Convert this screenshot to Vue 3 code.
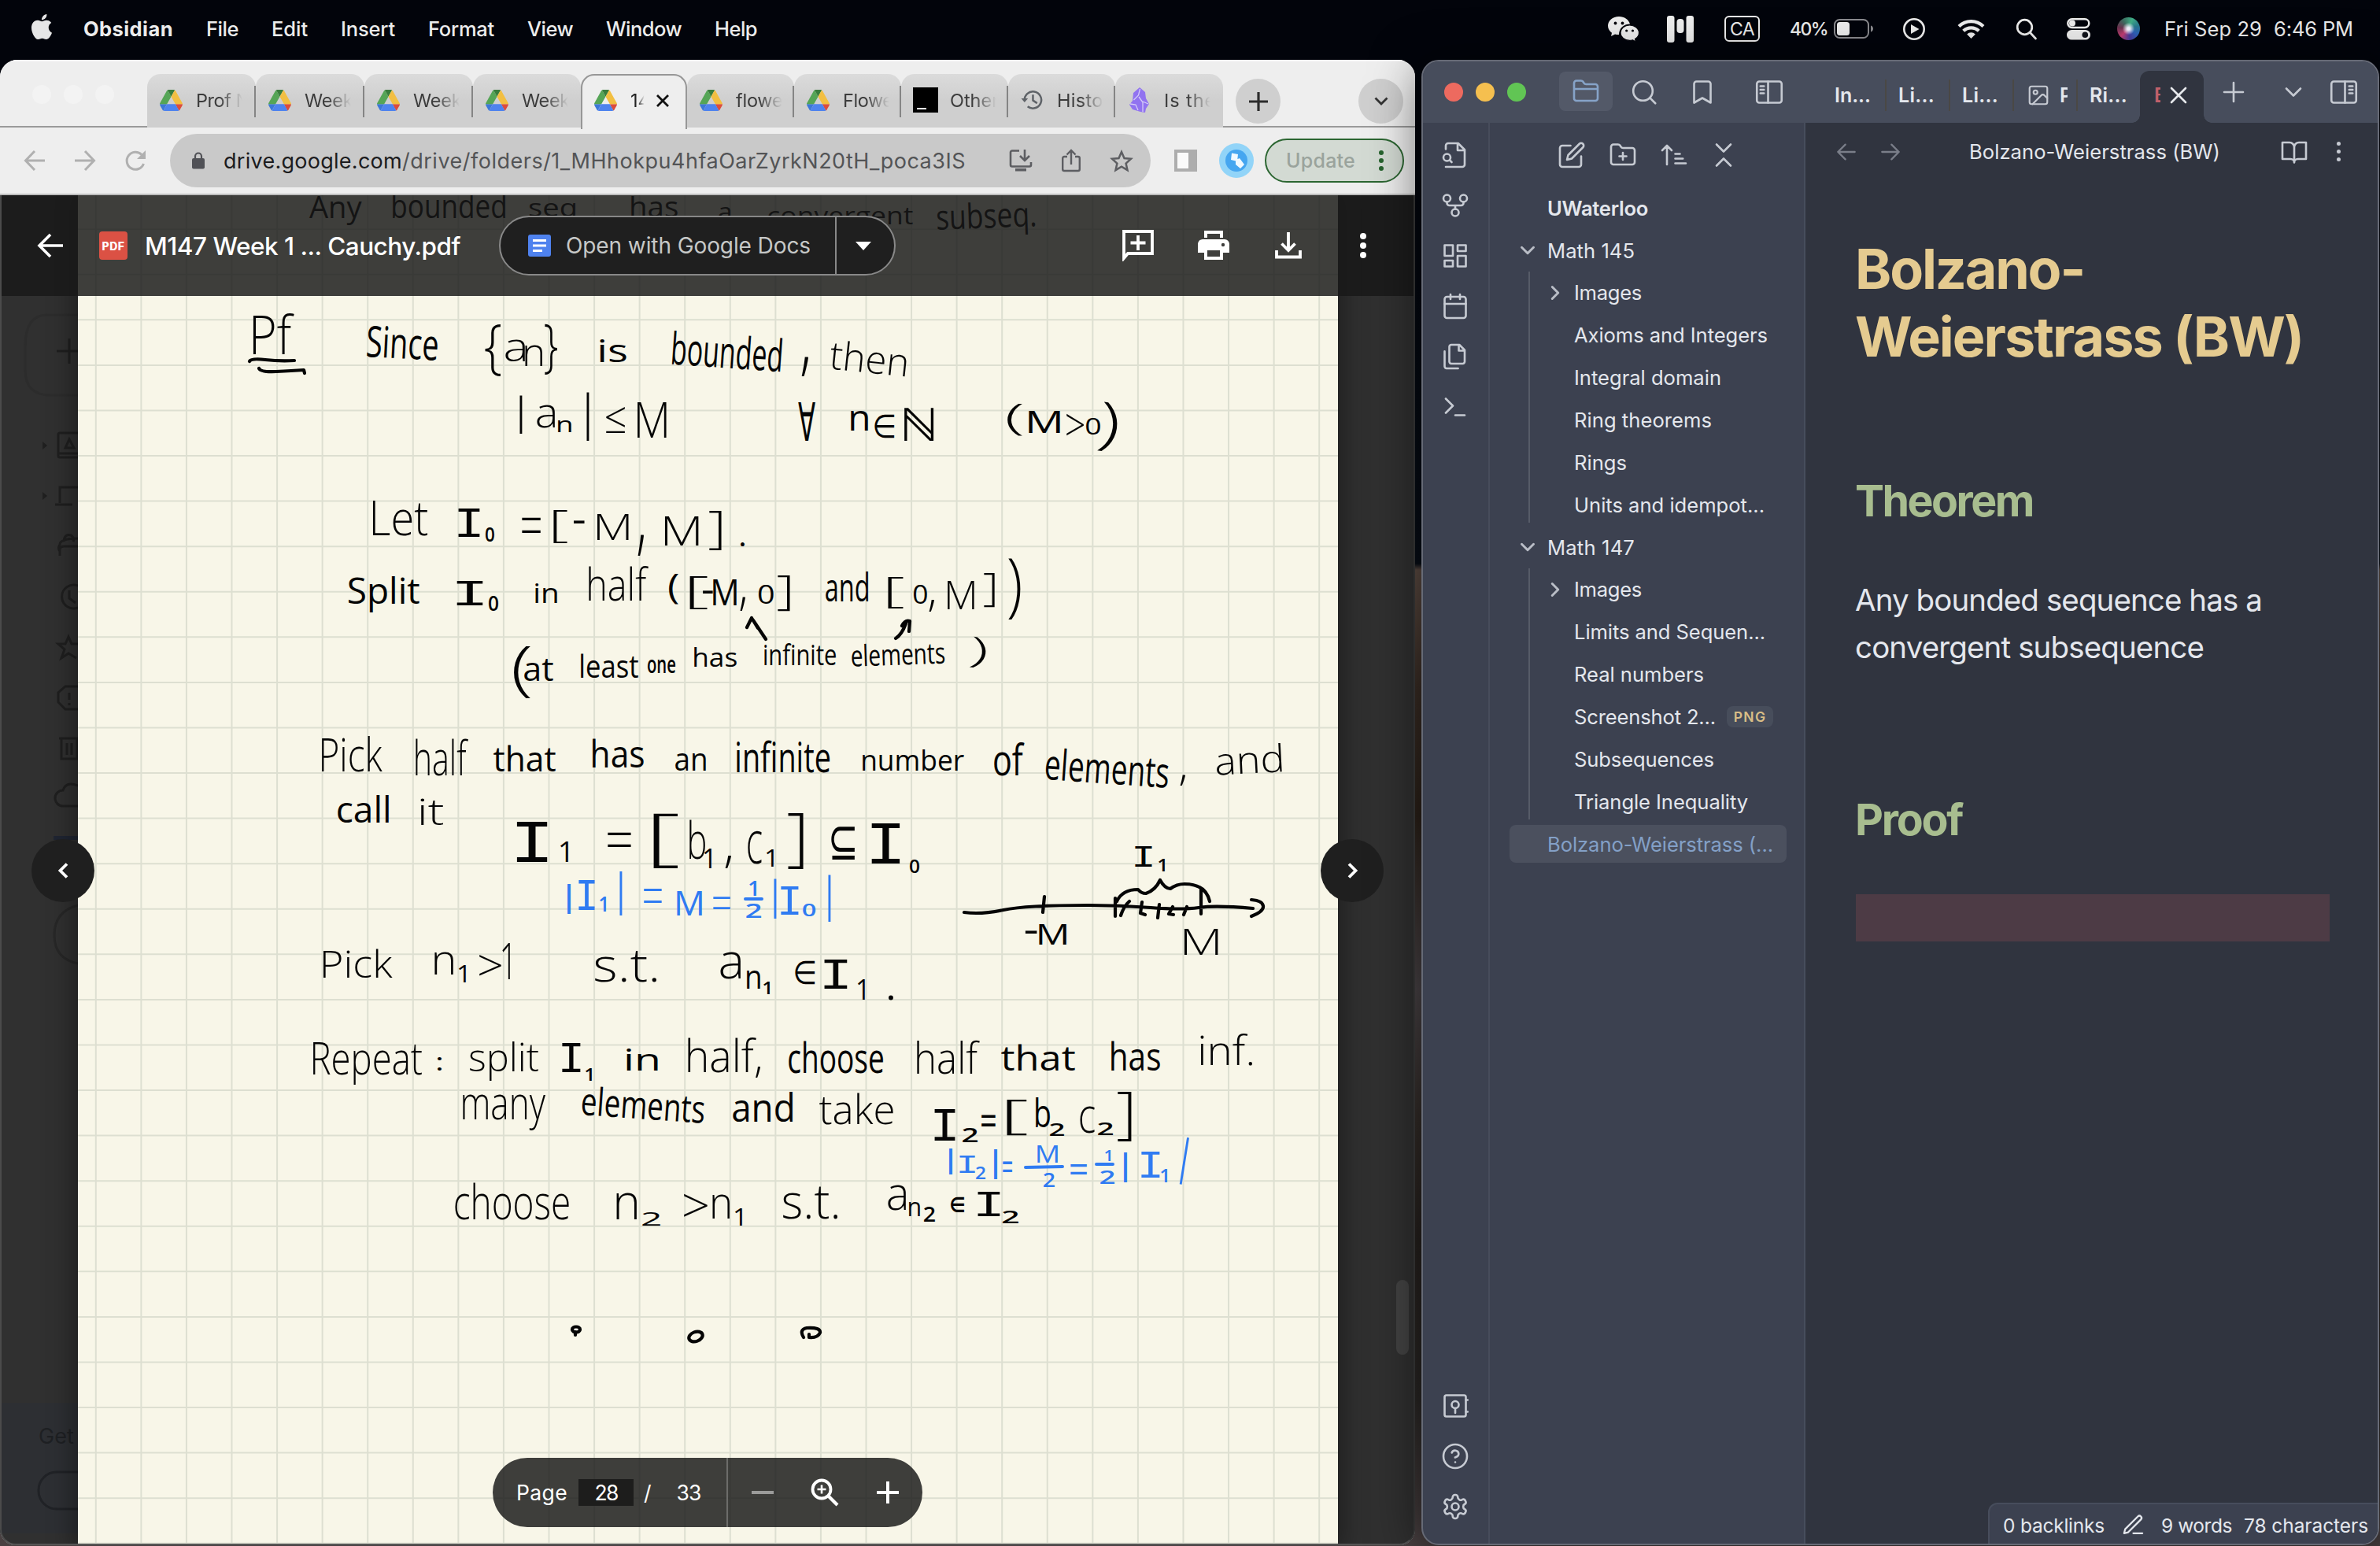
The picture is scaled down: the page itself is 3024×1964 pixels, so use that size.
<script setup>
// Spreads a label's letters so that it fills the given width
const vFit = {
  mounted(el, { value }) {
    const w = el.getBoundingClientRect().width
    el.style.letterSpacing = (value - w) / el.textContent.length + 'px'
  }
}

const menus = [['File', 41], ['Edit', 46], ['Insert', 69], ['Format', 84], ['View', 58], ['Window', 96], ['Help', 54]]

const driveTabs = [
  { t: 'Prof N', i: 'drive', w: 138, f: 68 }, { t: 'Week 2', i: 'drive', w: 138, f: 82 }, { t: 'Week 3', i: 'drive', w: 138, f: 82 },
  { t: 'Week 4', i: 'drive', w: 137, f: 82 }, { t: '147', i: 'drive', w: 135, f: 38, active: true },
  { t: 'flower', i: 'drive', w: 136, f: 68 }, { t: 'Flower', i: 'drive', w: 136, f: 72 }, { t: 'Other', i: 'term', w: 136, f: 62 },
  { t: 'Histor', i: 'hist', w: 136, f: 68 }, { t: 'Is ther', i: 'obs', w: 137, f: 76 }
]

const ribbon = ['fileSearch', 'graph', 'grid', 'cal', 'files', 'term']
const ribbonBottom = ['vault', 'help', 'gear']

const tree = [
  { t: 'UWaterloo', w: 128, l: 0, bold: true },
  { t: 'Math 145', w: 111, l: 0, open: true },
  { t: 'Images', w: 86, l: 1, closed: true },
  { t: 'Axioms and Integers', w: 246, l: 1 },
  { t: 'Integral domain', w: 187, l: 1 },
  { t: 'Ring theorems', w: 175, l: 1 },
  { t: 'Rings', w: 67, l: 1 },
  { t: 'Units and idempot...', w: 242, l: 1 },
  { t: 'Math 147', w: 111, l: 0, open: true },
  { t: 'Images', w: 86, l: 1, closed: true },
  { t: 'Limits and Sequen...', w: 243, l: 1 },
  { t: 'Real numbers', w: 165, l: 1 },
  { t: 'Screenshot 2...', w: 180, l: 1, tag: 'PNG' },
  { t: 'Subsequences', w: 178, l: 1 },
  { t: 'Triangle Inequality', w: 221, l: 1 },
  { t: 'Bolzano-Weierstrass (...', w: 287, l: 0, active: true }
]

const icons = {
  fileSearch: '<path d="M4 22h14a2 2 0 0 0 2-2V7.5L14.5 2H6a2 2 0 0 0-2 2v3M14 2v6h6M9 18l-1.5-1.5"/><circle cx="5" cy="14" r="3"/>',
  graph: '<circle cx="12" cy="18" r="3"/><circle cx="5" cy="6" r="3"/><circle cx="19" cy="6" r="3"/><path d="M19 9v1a2 2 0 0 1-2 2H7a2 2 0 0 1-2-2V9M12 12v3"/>',
  grid: '<path d="M3 3h7v9H3zM14 3h7v5h-7zM14 12h7v9h-7zM3 16h7v5H3z"/>',
  cal: '<rect x="3" y="4" width="18" height="18" rx="2"/><path d="M16 2v4M8 2v4M3 10h18"/>',
  files: '<path d="M15.5 2H8.6c-.4 0-.8.2-1.1.5-.3.3-.5.7-.5 1.1v12.8c0 .4.2.8.5 1.1.3.3.7.5 1.1.5h9.8c.4 0 .8-.2 1.1-.5.3-.3.5-.7.5-1.1V6.5zM15 2v5h5M3 7.6v12.8c0 .4.2.8.5 1.1.3.3.7.5 1.1.5h9.8"/>',
  term: '<path d="M4 17l6-6-6-6M12 19h8"/>',
  vault: '<rect x="3" y="3" width="18" height="18" rx="1.5"/><circle cx="12" cy="11" r="3"/><path d="M12 14v4M21 7h1.5M21 17h1.5"/>',
  help: '<circle cx="12" cy="12" r="10"/><path d="M9.1 9a3 3 0 0 1 5.8 1c0 2-3 3-3 3M12 17h.01"/>',
  gear: '<path d="M12.2 2h-.4a2 2 0 0 0-2 2v.2a2 2 0 0 1-1 1.7l-.4.3a2 2 0 0 1-2 0l-.2-.1a2 2 0 0 0-2.7.7l-.2.4a2 2 0 0 0 .7 2.7l.2.1a2 2 0 0 1 1 1.7v.5a2 2 0 0 1-1 1.8l-.2.1a2 2 0 0 0-.7 2.7l.2.4a2 2 0 0 0 2.7.7l.2-.1a2 2 0 0 1 2 0l.4.3a2 2 0 0 1 1 1.7v.2a2 2 0 0 0 2 2h.4a2 2 0 0 0 2-2v-.2a2 2 0 0 1 1-1.7l.4-.3a2 2 0 0 1 2 0l.2.1a2 2 0 0 0 2.7-.7l.2-.4a2 2 0 0 0-.7-2.7l-.2-.1a2 2 0 0 1-1-1.7v-.5a2 2 0 0 1 1-1.8l.2-.1a2 2 0 0 0 .7-2.7l-.2-.4a2 2 0 0 0-2.7-.7l-.2.1a2 2 0 0 1-2 0l-.4-.3a2 2 0 0 1-1-1.7V4a2 2 0 0 0-2-2z"/><circle cx="12" cy="12" r="3"/>',
  folder: '<path d="M20 20a2 2 0 0 0 2-2V8a2 2 0 0 0-2-2h-7.9a2 2 0 0 1-1.7-.9l-.8-1.2A2 2 0 0 0 7.9 3H4a2 2 0 0 0-2 2v13a2 2 0 0 0 2 2zM2 10h20"/>',
  folderPlus: '<path d="M20 20a2 2 0 0 0 2-2V8a2 2 0 0 0-2-2h-7.9a2 2 0 0 1-1.7-.9l-.8-1.2A2 2 0 0 0 7.9 3H4a2 2 0 0 0-2 2v13a2 2 0 0 0 2 2zM12 10v6M9 13h6"/>',
  search: '<circle cx="11" cy="11" r="8.2"/><path d="M21.5 21.5l-4.6-4.6"/>',
  bookmark: '<path d="M19 21l-7-4-7 4V5a2 2 0 0 1 2-2h10a2 2 0 0 1 2 2z"/>',
  sideL: '<rect x="1.5" y="3" width="21" height="18" rx="2"/><path d="M11 3v18M4.5 7h3M4.5 10h3M4.5 13h3"/>',
  sideR: '<rect x="1.5" y="3" width="21" height="18" rx="2"/><path d="M13 3v18M16.5 7h3M16.5 10h3M16.5 13h3"/>',
  edit: '<path d="M11 4H4a2 2 0 0 0-2 2v14a2 2 0 0 0 2 2h14a2 2 0 0 0 2-2v-7M18.5 2.5a2.1 2.1 0 0 1 3 3L12 15l-4 1 1-4z"/>',
  sort: '<path d="M6 20V4M2 8l4-4 4 4M13 11h4M13 15h6.5M13 19h9"/>',
  collapse: '<path d="M6 21l6-6 6 6M6 3l6 6 6-6"/>',
  image: '<rect x="3" y="3" width="18" height="18" rx="2"/><circle cx="9" cy="9" r="2"/><path d="M21 15l-3-3a2 2 0 0 0-3 0l-9 9"/>',
  x: '<path d="M18 6L6 18M6 6l12 12"/>',
  plus: '<path d="M12 4v16M4 12h16"/>',
  down: '<path d="M6 9l6 6 6-6"/>',
  right: '<path d="M9 6l6 6-6 6"/>',
  back: '<path d="M20 12H4M11 5l-7 7 7 7"/>',
  fwd: '<path d="M4 12h16M13 5l7 7-7 7"/>',
  book: '<path d="M2 4h6a4 4 0 0 1 4 4v13a3 3 0 0 0-3-3H2zM22 4h-6a4 4 0 0 0-4 4v13a3 3 0 0 1 3-3h7z"/>',
  pen: '<path d="M12 20h9M16.5 3.5a2.1 2.1 0 0 1 3 3L7 19l-4 1 1-4z"/>'
}

// Handwritten notes: text, left, right, top, bottom of the ink on the page, tilt
const black = [
  ['Pf', 322, 374, 398, 451], ['Since', 467, 556, 415, 456, 3], ['{', 616, 636, 412, 478], ['a', 642, 667, 432, 459], ['n', 667, 689, 438, 465], ['}', 692, 708, 412, 476],
  ['is', 762, 796, 430, 460], ['bounded', 855, 993, 424, 468, 4], [',', 1018, 1027, 453, 478], ['then', 1055, 1152, 436, 474, 6],
  ['|', 660, 664, 502, 551], ['a', 682, 705, 515, 544], ['n', 709, 726, 534, 549], ['|', 745, 749, 498, 560], ['≤', 770, 794, 517, 551], ['M', 810, 847, 511, 556],
  ['∀', 1014, 1036, 511, 560], ['n', 1081, 1103, 522, 547], ['∈', 1111, 1136, 526, 556], ['ℕ', 1149, 1187, 518, 560], ['(', 1280, 1299, 513, 553], ['M', 1307, 1347, 522, 550],
  ['>', 1355, 1377, 526, 554], ['0', 1380, 1398, 530, 552], [')', 1398, 1420, 512, 574, 8],
  ['Let', 474, 543, 637, 681], ['I', 582, 610, 647, 682], ['0', 617, 628, 670, 688], ['=', 663, 687, 657, 677], ['[', 703, 721, 648, 690], ['-', 729, 743, 661, 665],
  ['M', 759, 799, 653, 686], [',', 810, 818, 679, 706], ['M', 845, 888, 656, 693], [']', 901, 917, 650, 699], ['.', 941, 946, 689, 694],
  ['Split', 443, 533, 732, 778], ['I', 580, 614, 738, 769], ['0', 621, 633, 756, 776], ['in', 680, 708, 741, 766], ['half', 748, 824, 720, 764],
  ['(', 850, 862, 729, 767], ['[', 876, 899, 733, 774], ['-', 893, 906, 750, 754], ['M', 906, 936, 735, 769], [',', 940, 947, 758, 776], ['0', 964, 983, 743, 767], [']', 988, 1004, 731, 776],
  ['and', 1049, 1103, 726, 764], ['[', 1128, 1148, 733, 773], ['0', 1161, 1178, 743, 767], [',', 1180, 1187, 762, 777], ['M', 1204, 1238, 738, 774], [']', 1250, 1264, 728, 772], [')', 1281, 1297, 710, 787],
  ['(', 653, 674, 822, 887], ['at', 666, 703, 836, 865], ['least', 738, 811, 829, 861], ['one', 823, 858, 838, 855], ['has', 882, 936, 822, 847], ['infinite', 971, 1062, 816, 845], ['elements', 1082, 1200, 816, 845, -2], [')', 1234, 1253, 810, 849, 8],
  ['Pick', 409, 486, 935, 981], ['half', 528, 595, 938, 986], ['that', 627, 706, 946, 980], ['has', 753, 818, 938, 975], ['an', 858, 897, 957, 979], ['infinite', 936, 1054, 941, 982],
  ['number', 1096, 1225, 950, 979], ['of', 1263, 1302, 943, 986], ['elements', 1329, 1485, 954, 996, 4], [',', 1499, 1506, 984, 998], ['and', 1545, 1628, 946, 983, -3],
  ['call', 429, 494, 1010, 1045], ['it', 534, 563, 1014, 1048],
  ['I', 656, 696, 1044, 1095], ['1', 712, 722, 1069, 1095], ['=', 772, 802, 1057, 1076], ['[', 830, 862, 1034, 1103], ['b', 876, 896, 1043, 1092], ['1', 895, 904, 1078, 1103],
  [',', 921, 929, 1087, 1103], ['c', 950, 968, 1056, 1098], ['1', 974, 983, 1078, 1101], [']', 1001, 1021, 1034, 1104], ['⊆', 1056, 1086, 1050, 1092], ['I', 1107, 1144, 1046, 1097], ['0', 1156, 1168, 1092, 1109],
  ['I', 1442, 1464, 1075, 1101], ['1', 1472, 1480, 1092, 1107], ['-', 1303, 1318, 1182, 1186], ['M', 1320, 1355, 1173, 1200], ['M', 1505, 1548, 1180, 1213],
  ['Pick', 411, 499, 1205, 1242], ['n', 552, 576, 1209, 1238], ['1', 583, 592, 1226, 1248], ['>', 609, 637, 1213, 1240], ['1', 638, 648, 1197, 1244], ['s.t.', 756, 834, 1208, 1248],
  ['a', 915, 941, 1210, 1244], ['n', 949, 966, 1233, 1256], ['1', 970, 978, 1248, 1263], ['∈', 1010, 1035, 1220, 1250], ['I', 1047, 1077, 1219, 1256], ['1', 1090, 1099, 1244, 1270], ['.', 1129, 1135, 1265, 1271],
  ['Repeat', 398, 536, 1323, 1378], [':', 556, 561, 1342, 1360], ['split', 597, 684, 1323, 1373], ['I', 714, 738, 1325, 1362], ['1', 744, 752, 1357, 1373], ['in', 796, 836, 1332, 1360],
  ['half,', 874, 966, 1318, 1370], ['choose', 1002, 1122, 1322, 1364], ['half', 1165, 1245, 1322, 1365], ['that', 1272, 1366, 1326, 1360], ['has', 1412, 1474, 1322, 1360], ['inf.', 1525, 1591, 1314, 1354],
  ['many', 588, 693, 1390, 1436], ['elements', 740, 895, 1384, 1422, 4], ['and', 931, 1007, 1387, 1425], ['take', 1041, 1135, 1390, 1429],
  ['I', 1187, 1214, 1409, 1449], ['2', 1223, 1242, 1433, 1451], ['=', 1247, 1265, 1416, 1431], ['[', 1279, 1305, 1397, 1442], ['b', 1316, 1334, 1393, 1432], ['2', 1334, 1352, 1427, 1443], ['c', 1372, 1391, 1406, 1440],
  ['2', 1395, 1414, 1427, 1442], [']', 1420, 1438, 1388, 1451],
  ['choose', 578, 723, 1503, 1550], ['n', 783, 809, 1515, 1549], ['2', 816, 839, 1540, 1557], ['>', 869, 899, 1516, 1546], ['n', 905, 927, 1517, 1548], ['1', 934, 943, 1534, 1557],
  ['s.t.', 995, 1064, 1508, 1549], ['a', 1128, 1151, 1506, 1538], ['n', 1155, 1169, 1527, 1545], ['2', 1174, 1188, 1533, 1552], ['∈', 1208, 1225, 1520, 1540], ['I', 1242, 1271, 1515, 1545], ['2', 1274, 1294, 1538, 1554]
]
const blue = [
  ['|', 721, 725, 1123, 1161], ['I', 735, 756, 1118, 1156], ['1', 762, 770, 1138, 1158], ['|', 787, 791, 1108, 1163], ['=', 818, 841, 1129, 1147], ['M', 860, 892, 1131, 1163],
  ['=', 906, 928, 1139, 1155], ['1', 952, 961, 1118, 1138], ['2', 948, 967, 1148, 1166], ['|', 983, 987, 1117, 1167], ['I', 992, 1015, 1127, 1162], ['0', 1020, 1036, 1148, 1164], ['|', 1052, 1056, 1111, 1171],
  ['|', 1206, 1210, 1458, 1492], ['I', 1219, 1239, 1468, 1490], ['2', 1240, 1252, 1482, 1498], ['|', 1263, 1267, 1460, 1498], ['=', 1274, 1286, 1475, 1489], ['M', 1318, 1344, 1455, 1477],
  ['2', 1326, 1340, 1490, 1508], ['=', 1360, 1381, 1478, 1491], ['1', 1404, 1411, 1461, 1475], ['2', 1398, 1416, 1487, 1504], ['|', 1428, 1432, 1464, 1502], ['I', 1450, 1474, 1463, 1496], ['1', 1475, 1483, 1485, 1502], ['|', 1503, 1507, 1445, 1505, 9]
]
const faint = [
  ['Any', 393, 460, 248, 286], ['bounded', 499, 642, 244, 277], ['seq', 673, 731, 258, 282], ['has', 802, 861, 248, 276], ['a', 913, 928, 263, 280], ['convergent', 976, 1160, 264, 292], ['subseq.', 1191, 1315, 256, 300, -2]
]

const ctx = document.createElement('canvas').getContext('2d')
// Picks the weight whose stems come nearest to the pen's width, then scales the ink to its box
const place = ([t, x0, x1, y0, y1, rot = 0]) => {
  const family = t === 'I' ? '"Liberation Mono", monospace' : '"Open Sans", "DejaVu Sans", sans-serif'
  const measure = (weight) => {
    ctx.font = `${weight} 100px ${family}`
    const m = ctx.measureText(t)
    const l = m.actualBoundingBoxLeft, r = m.actualBoundingBoxRight
    const a = m.actualBoundingBoxAscent, d = m.actualBoundingBoxDescent
    return { l, sx: (x1 - x0) / (l + r), sy: (y1 - y0) / (a + d), a }
  }
  let weight = 400
  let m = measure(weight)
  if (t !== 'I') {
    const stem = 3.9 / Math.sqrt(m.sx * m.sy)
    weight = stem < 8.2 ? 300 : stem < 10.5 ? 400 : stem < 12.5 ? 500 : 600
    m = measure(weight)
  }
  return {
    t, weight, family,
    tf: `rotate(${rot} ${(x0 + x1) / 2} ${(y0 + y1) / 2}) translate(${x0 + m.l * m.sx} ${y0 + m.a * m.sy}) scale(${m.sx} ${m.sy})`
  }
}
const ink = [
  { c: '#050505', words: black.map(place) },
  { c: '#2f7bf2', words: blue.map(place) },
  { c: '#000', words: faint.map(place) }
]
const vLines = Array.from({ length: 28 }, (_, i) => 121.8 + i * 57.57)
const hLines = Array.from({ length: 30 }, (_, i) => 291.2 + i * 57.57)
</script>

<template>
  <div class="desktop">
    <header class="menubar">
      <svg class="apple" viewBox="0 0 24 24"><path d="M12.152 6.896c-.948 0-2.415-1.078-3.96-1.04-2.040.027-3.910 1.183-4.961 3.014-2.117 3.675-.546 9.103 1.519 12.090 1.013 1.454 2.208 3.090 3.792 3.039 1.520-.065 2.090-.987 3.935-.987 1.831 0 2.350.987 3.960.948 1.637-.026 2.676-1.480 3.676-2.948 1.156-1.688 1.636-3.325 1.662-3.415-.039-.013-3.182-1.221-3.220-4.857-.026-3.040 2.480-4.494 2.597-4.559-1.429-2.090-3.623-2.324-4.390-2.376-2-.156-3.675 1.090-4.610 1.090zM15.530 3.830c.843-1.012 1.400-2.427 1.245-3.830-1.207.052-2.662.805-3.532 1.818-.780.896-1.454 2.338-1.273 3.714 1.338.104 2.715-.688 3.559-1.701" /></svg>
      <nav class="menus">
        <b v-fit="114">Obsidian</b>
        <span v-for="m in menus" :key="m[0]" v-fit="m[1]">{{ m[0] }}</span>
      </nav>
      <div class="status">
        <svg width="42" height="34" viewBox="0 0 42 34" fill="#ededed"><path d="M15 1C7 1 1 6.200 1 12.800c0 3.700 2 6.800 5 9L5 26l5-2.600c1.500.4 3.300.7 5 .7C15 15 22 10.500 29 10.500 27.500 5 22 1 15 1z" /><path d="M28.500 12C22 12 17 16.300 17 21.700s5 9.700 11.500 9.700c1.400 0 2.700-.2 4-.6l4 2.200-1-3.500c3-1.800 5-4.600 5-7.800C40.500 16.300 35 12 28.500 12z" stroke="#05060d" stroke-width="1.200" /><g fill="#05060d"><circle cx="10.500" cy="9.500" r="1.900" /><circle cx="19.500" cy="9.500" r="1.900" /><circle cx="24.700" cy="19" r="1.600" /><circle cx="32.500" cy="19" r="1.600" /></g></svg>
        <svg class="bars" width="34" height="34" viewBox="0 0 34 34" fill="#ededed"><rect x="0" y="0" width="9.500" height="34" rx="3" /><rect x="24.500" y="0" width="9.500" height="34" rx="3" /><rect x="12.500" y="4" width="9" height="18" rx="4" /></svg>
        <span class="lang"><i v-fit="31">CA</i></span>
        <span class="pct" v-fit="48">40%</span>
        <svg class="batt" width="51" height="26" viewBox="0 0 51 26"><rect x="1" y="1" width="43" height="23" rx="6.500" fill="none" stroke="#8a8a8e" stroke-width="2" /><rect x="4" y="4" width="16" height="17" rx="3.500" fill="#ededed" /><path d="M47 8.500c4 1 4 7 0 8z" fill="#8a8a8e" /></svg>
        <svg class="play" width="30" height="30" viewBox="0 0 30 30"><circle cx="15" cy="15" r="12.700" fill="none" stroke="#ededed" stroke-width="2.600" /><path d="M11 9l10.500 6L11 21z" fill="#ededed" /></svg>
        <svg class="wifi" width="35" height="26" viewBox="0 0 35 26"><g fill="none" stroke="#ededed" stroke-width="4.200"><path d="M2 9.500a22 22 0 0 1 31 0" /><path d="M7.700 15.300a14 14 0 0 1 19.600 0" /></g><path d="M17.500 25l-5.300-5.500a7.600 7.600 0 0 1 10.600 0z" fill="#ededed" /></svg>
        <svg class="spot" width="28" height="28" viewBox="0 0 28 28" fill="none" stroke="#ededed" stroke-width="2.700" stroke-linecap="round"><circle cx="11.500" cy="11.500" r="9.300" /><path d="M18.500 18.500l7 7.500" /></svg>
        <svg class="cc" width="30" height="28" viewBox="0 0 30 28"><rect x="1.300" y="1.300" width="27" height="10.600" rx="5.300" fill="none" stroke="#ededed" stroke-width="2.500" /><circle cx="7" cy="6.600" r="4" fill="#ededed" /><rect x="0" y="15" width="30" height="12.600" rx="6.300" fill="#ededed" /><circle cx="23.300" cy="21.300" r="3.800" fill="#10121a" /></svg>
        <span class="siri"></span>
        <span class="date" v-fit="124">Fri Sep 29</span>
        <span class="time" v-fit="101">6:46 PM</span>
      </div>
    </header>

    <main class="windows">
      <section class="chrome">
        <div class="strip">
          <div class="lights"><i></i><i></i><i></i></div>
          <div class="tabs">
            <div v-for="(t, k) in driveTabs" :key="k" class="tab" :class="{ active: t.active, sep: [0, 1, 2, 5, 6, 7, 8].includes(k) }" :style="{ width: t.w + 'px' }">
              <svg v-if="t.i === 'drive'" class="fav" width="29" height="27" viewBox="0 0 87.300 78" preserveAspectRatio="none">
                <path d="m6.600 66.850 3.850 6.650c.8 1.400 1.950 2.500 3.300 3.300l13.750-23.800h-27.500c0 1.550.4 3.100 1.200 4.500z" fill="#3c78d8" />
                <path d="m43.650 25-13.750-23.800c-1.350.8-2.500 1.900-3.300 3.300l-25.400 44a9.060 9.060 0 0 0 -1.200 4.500h27.500z" fill="#55a556" />
                <path d="m73.550 76.800c1.350-.8 2.500-1.900 3.300-3.300l1.600-2.750 7.650-13.250c.8-1.400 1.200-2.950 1.200-4.500h-27.502l5.852 11.500z" fill="#dc4c3c" />
                <path d="m43.650 25 13.750-23.800c-1.350-.8-2.900-1.200-4.500-1.200h-18.500c-1.600 0-3.150.45-4.500 1.200z" fill="#397d3c" />
                <path d="m59.800 53h-32.300l-13.750 23.800c1.350.8 2.900 1.200 4.500 1.200h50.800c1.600 0 3.150-.45 4.500-1.200z" fill="#4e83ee" />
                <path d="m73.400 26.500-12.700-22c-.8-1.400-1.950-2.500-3.300-3.300l-13.750 23.800 16.150 28h27.450c0-1.550-.4-3.100-1.200-4.500z" fill="#f2bf42" />
              </svg>
              <span v-else-if="t.i === 'term'" class="fav termfav"><i></i></span>
              <svg v-else-if="t.i === 'hist'" class="fav" width="29" height="26" viewBox="0 0 30 26" fill="none" stroke="#5f6368" stroke-width="2.600"><path d="M5 14A11 11 0 1 1 9 21.500M16 6v7.500l5.500 3.800" /><path d="M.5 11h9L5 16z" fill="#5f6368" stroke="none" /></svg>
              <svg v-else class="fav" width="29" height="32" viewBox="-2 0 29 32"><path d="M13 0l7 6 1 8 4 7-4 6-1 5-6-1-10-3-4-6 4-5 1-10z" fill="#9173f0" /><path d="M13.500 2l-2 8-6 6M12 12l5 7v12M1 21l7 1 3 7M17 18l7 3" stroke="#d5cbf8" fill="none" stroke-width="1.300" /></svg>
              <span class="tt"><em v-fit="t.f">{{ t.t }}</em></span>
              <svg v-if="t.active" class="tx" width="18" height="18" viewBox="0 0 18 18"><path d="M2 2l14 14M16 2L2 16" stroke="#111" stroke-width="2.800" /></svg>
            </div>
          </div>
          <span class="round"><svg width="26" height="26" viewBox="0 0 26 26"><path d="M13 1v24M1 13h24" stroke="#2c2c2c" stroke-width="3.200" /></svg></span>
          <span class="round last"><svg width="18" height="12" viewBox="0 0 18 12" fill="none"><path d="M1.500 1.500L9 9l7.500-7.500" stroke="#333" stroke-width="2.800" /></svg></span>
        </div>
        <div class="toolbar">
          <svg class="nav" width="28" height="28" viewBox="0 0 28 28"><path d="M27 14H3M14 2L2.500 14 14 26" /></svg>
          <svg class="nav" width="28" height="28" viewBox="0 0 28 28"><path d="M1 14h24M14 2l11.500 12L14 26" /></svg>
          <svg class="nav" width="28" height="28" viewBox="0 0 28 28"><path d="M24.500 18A11 11 0 1 1 22 6.500" /><path d="M27 1v11H16z" fill="#b0b0b0" stroke="none" /></svg>
          <div class="omni">
            <svg class="lock" width="16" height="22" viewBox="0 0 16 22"><rect y="8" width="16" height="13.500" rx="2" fill="#505156" /><path d="M4 9V5.500a4 4 0 0 1 8 0V9" fill="none" stroke="#505156" stroke-width="2.200" /></svg>
            <span class="url"><b v-fit="227">drive.google.com</b><span v-fit="716">/drive/folders/1_MHhokpu4hfaOarZyrkN20tH_poca3IS</span></span>
            <svg class="o1" width="30" height="28" viewBox="0 0 30 28" fill="none" stroke="#5d5e62" stroke-width="2.600"><path d="M13 1.500H4a2 2 0 0 0-2 2v16a2 2 0 0 0 2 2h22a2 2 0 0 0 2-2V16M20 0v13M14 8l6 6 6-6" /><path d="M8 24h14v3.500H8z" fill="#5d5e62" stroke="none" /></svg>
            <svg class="o2" width="24" height="30" viewBox="0 0 24 30" fill="none" stroke="#5d5e62" stroke-width="2.400"><path d="M7 10H3.200a2 2 0 0 0-2 2v14a2 2 0 0 0 2 2h17.600a2 2 0 0 0 2-2V12a2 2 0 0 0-2-2H17M12 20V2.500M6.500 7.500L12 2l5.500 5.500" /></svg>
            <svg class="o3" width="30" height="29" viewBox="0 0 30 29" fill="none" stroke="#5d5e62" stroke-width="2.500"><path d="M15 3l3.500 8 8.500.8-6.400 5.800 1.900 8.500-7.500-4.500-7.500 4.500 1.900-8.500L3 11.800l8.500-.8z" /></svg>
          </div>
          <span class="panel"></span>
          <span class="avatar"><svg width="28" height="28" viewBox="0 0 28 28"><circle cx="14" cy="14" r="14" fill="#46a6f0" /><path d="M8 4.500l8 1.500-1 9-8-2zM13 13l5-2 6 8-5 5-6-5z" fill="#f1f9ff" /></svg></span>
          <span class="update"><span v-fit="88">Update</span><i class="dots"><i></i><i></i><i></i></i></span>
        </div>

        <div class="viewer">
          <svg class="under" width="99" height="1714" viewBox="0 248 99 1714" fill="none" stroke="#1f1f1f" stroke-width="3">
            <path d="M99 400H60Q32 400 32 440v30q0 32 32 32h35" stroke="#2c2c2c" />
            <path d="M88 430v32M72 446h30M99 550H76q-2 0-2 2v27q0 2 2 2h23M74 576h25M83 569l5-11 6 11zM99 619H76v20M70 641h22M76 700a6 6 0 0 1 0-8q0-8 23-8M76 706v-8q0-4 6-4h17M82 688a6 6 0 1 1 11 0M99 744a15 15 0 1 0 0 28M88 750v10l8 6M99 818h-8l-4-9-4 9H74l8 7-4 11 9-6 10 6M99 872H83l-9 8v12l9 9h16M88 880v9M88 893v3M78 938h20v26H78zM75 938h24M85 944v15M91 944v15M99 1024H80a10 10 0 0 1 0-20q4-12 19-6" />
            <path d="M99 1150q-30 8-30 38t30 36" stroke="#272727" />
            <path d="M54 561l6 5-6 5zM54 625l6 5-6 5z" fill="#1f1f1f" stroke="none" />
            <rect x="68" y="1062" width="31" height="5" fill="#1f2532" stroke="none" />
            <rect x="0" y="1782" width="99" height="166" fill="#2d2f33" stroke="none" />
            <rect x="49" y="1870" width="90" height="47" rx="23" stroke="#202226" />
          </svg>
          <span class="get">Get</span>
          <svg class="paper" width="1601" height="1714" viewBox="99 248 1601 1714">
            <rect x="99" y="248" width="1601" height="1714" fill="#f8f6e8" />
            <g stroke="#dddfd1" stroke-width="2"><line v-for="x in vLines" :key="x" :x1="x" :x2="x" y1="248" y2="1962" /><line v-for="y in hLines" :key="y" x1="99" x2="1700" :y1="y" :y2="y" /></g>
            <g v-for="g in ink" :key="g.c" :fill="g.c">
              <text v-for="(w, k) in g.words" :key="k" font-size="100" :font-weight="w.weight" :font-family="w.family" :transform="w.tf">{{ w.t }}</text>
            </g>
            <g fill="none" stroke="#050505" stroke-width="4.200" stroke-linecap="round" stroke-linejoin="round">
              <path d="M317 459q2-4 20-2t37 1M329 468q2 5 22 4t35-2l1 4" />
              <path d="M949 797l6-12 8 13M957 788l16 24M1138 811q8-5 13-19M1146 795q4-8 10-6l-1 13" />
              <path d="M1225 1159q22 3 50-3t108-6q40 0 79 3t61 0 69 1M1590 1143q14 1 15 8t-15 13M1327 1139l-2 20M1417 1141v23M1526 1130v31M1435 1145q-7 6-11 18M1451 1146l-2 14 6 2M1473 1149l-2 17M1490 1152l-5 9 6 1M1508 1152l-4 10" />
              <path d="M1419 1145q7-15 27-15 4 5 10 5 12-4 18-17 6 11 13 11 8-6 18-6 27 0 32 22" />
              <ellipse cx="732" cy="1689" rx="5" ry="3.500" /><path d="M731 1692v4" /><ellipse cx="884" cy="1698" rx="9" ry="6" transform="rotate(-20 884 1698)" />
              <path d="M1021 1699q-6-10 4-12 18-1 17 6-3 7-14 6v-4" />
            </g>
            <path d="M947 1142h21M1303 1483l47-1M1393 1479h21" stroke="#2f7bf2" stroke-width="4" stroke-linecap="round" />
          </svg>
          <div class="pdfhead">
            <svg class="pback" width="34" height="32" viewBox="0 0 34 32" fill="none" stroke="#fff" stroke-width="3.600"><path d="M33 16H4M17 2L3 16l14 14" /></svg>
            <span class="pdf"><i v-fit="29">PDF</i></span>
            <span class="fname" v-fit="401">M147 Week 1 ... Cauchy.pdf</span>
            <div class="open">
              <svg width="29" height="28" viewBox="0 0 29 28"><rect width="29" height="28" rx="3" fill="#4f82ee" /><path d="M6 7.500h17M6 14h17M6 20.500h12" stroke="#fff" stroke-width="3" /></svg>
              <span v-fit="311">Open with Google Docs</span>
              <i class="caret"></i>
            </div>
            <div class="pacts">
              <svg width="42" height="40" viewBox="0 0 42 40" fill="none" stroke="#fff" stroke-width="3.800"><path d="M3 36V2h36v28H8zM21 7v19M11.500 16.500h19" /></svg>
              <svg width="42" height="38" viewBox="0 0 42 38" fill="#fff"><path d="M9 0h24v9H9z" /><path d="M7 11h28a6 6 0 0 1 6 6v11h-8v9H9v-9H1V17a6 6 0 0 1 6-6z" /><path d="M13 4h16v5H13zM13 25h16v8H13z" fill="#3e3e3c" /><circle cx="33" cy="18" r="2.200" fill="#3e3e3c" /></svg>
              <svg width="34" height="34" viewBox="0 0 34 34" fill="none" stroke="#fff" stroke-width="3.800"><path d="M17 0v22M8.500 14.500L17 23l8.500-8.500M2 23v8.500h30V23" /></svg>
              <svg width="8" height="34" viewBox="0 0 8 34" fill="#fff"><circle cx="4" cy="5" r="4" /><circle cx="4" cy="17" r="4" /><circle cx="4" cy="29" r="4" /></svg>
            </div>
          </div>
          <span class="turn prev"><svg width="14" height="20" viewBox="0 0 14 20"><path d="M12 1.500L3.500 10l8.500 8.500" /></svg></span>
          <span class="turn next"><svg width="14" height="20" viewBox="0 0 14 20"><path d="M2 1.500L10.500 10 2 18.500" /></svg></span>
          <span class="thumb"></span>
          <div class="pager">
            <div class="pg"><span v-fit="65">Page</span><span class="cur"><i v-fit="29">28</i></span><span class="sl">/</span><span v-fit="31">33</span></div>
            <div class="zm">
              <i class="minus"></i>
              <svg width="38" height="36" viewBox="0 0 38 36" fill="none" stroke="#fff" stroke-width="3.800"><circle cx="14" cy="14" r="11.500" /><path d="M22.500 22.500L34 34" stroke-width="4.200" /><path d="M14 8.500v11M8.500 14h11" stroke-width="2.600" /></svg>
              <svg width="28" height="28" viewBox="0 0 28 28" stroke="#fff" stroke-width="4"><path d="M14 0v28M0 14h28" /></svg>
            </div>
          </div>
        </div>
      </section>

      <section class="obsidian">
        <div class="otitle">
          <div class="olights"><i></i><i></i><i></i></div>
          <span class="obtn"><svg class="ic" viewBox="0 0 24 24" v-html="icons.folder" /></span>
          <svg class="ic is" viewBox="0 0 24 24" v-html="icons.search" />
          <svg class="ic ib" viewBox="0 0 24 24" v-html="icons.bookmark" />
          <svg class="ic il" viewBox="0 0 24 24" v-html="icons.sideL" />
          <div class="otabs">
            <span class="ot"><i v-fit="46">In...</i></span>
            <span class="ot"><i v-fit="46">Li...</i></span>
            <span class="ot"><i v-fit="46">Li...</i></span>
            <span class="ot"><svg class="ic im" viewBox="0 0 24 24" v-html="icons.image" /><i class="clip">P</i></span>
            <span class="ot"><i v-fit="48">Ri...</i></span>
            <span class="ot on"><i class="clip red">B</i><svg class="ic ix" viewBox="0 0 24 24" v-html="icons.x" /></span>
          </div>
          <svg class="ic ip" viewBox="0 0 24 24" v-html="icons.plus" />
          <svg class="ic id" viewBox="0 0 24 24" v-html="icons.down" />
          <svg class="ic ir" viewBox="0 0 24 24" v-html="icons.sideR" />
        </div>
        <div class="obody">
          <div class="ribbon">
            <svg v-for="r in ribbon" :key="r" class="ic" viewBox="0 0 24 24" v-html="icons[r]" />
            <div class="grow"></div>
            <svg v-for="r in ribbonBottom" :key="r" class="ic" viewBox="0 0 24 24" v-html="icons[r]" />
          </div>
          <aside class="side">
            <div class="tools">
              <svg v-for="r in ['edit', 'folderPlus', 'sort', 'collapse']" :key="r" class="ic" :class="r" viewBox="0 0 24 24" v-html="icons[r]" />
            </div>
            <div v-for="(r, k) in tree" :key="k" class="row" :class="{ child: r.l, active: r.active, bold: r.bold, lastc: k === 7 || k === 14 }">
              <svg v-if="r.open || r.closed" class="chev" viewBox="0 0 24 24" v-html="r.open ? icons.down : icons.right" />
              <span class="rt"><i v-fit="r.w">{{ r.t }}</i></span>
              <span v-if="r.tag" class="tag">{{ r.tag }}</span>
            </div>
          </aside>
          <article class="note">
            <div class="nhead">
              <svg class="ic dim" viewBox="0 0 24 24" v-html="icons.back" />
              <svg class="ic dim" viewBox="0 0 24 24" v-html="icons.fwd" />
              <span class="nt"><i v-fit="319">Bolzano-Weierstrass (BW)</i></span>
              <svg class="ic bk" viewBox="0 0 24 24" v-html="icons.book" />
              <i class="ndots"><i></i><i></i><i></i></i>
            </div>
            <h1><span v-fit="291">Bolzano-</span><br><span v-fit="568">Weierstrass (BW)</span></h1>
            <h2><span v-fit="226">Theorem</span></h2>
            <p><span v-fit="517">Any bounded sequence has a</span><br><span v-fit="443">convergent subsequence</span></p>
            <h2 class="pr"><span v-fit="136">Proof</span></h2>
            <div class="block"></div>
            <footer class="obar">
              <span v-fit="129">0 backlinks</span>
              <svg class="ic" viewBox="0 0 24 24" v-html="icons.pen" />
              <span v-fit="90">9 words</span>
              <span v-fit="158">78 characters</span>
            </footer>
          </article>
        </div>
      </section>
    </main>
  </div>
</template>

<style>
body { margin: 0; background: #03050c; overflow: hidden; }
</style>

<style scoped>
* { box-sizing: border-box; }
i, em { font-style: normal; }
svg { display: block; flex: none; }
.desktop { width: 3024px; height: 1964px; overflow: hidden; display: flex; flex-direction: column; font-family: Inter, "Noto Sans", sans-serif; background: #02040b; white-space: nowrap; }
.menubar { height: 76px; flex: none; padding: 0 34px 3px 37px; display: flex; align-items: center; color: #ececec; font-size: 25.5px; line-height: 32px; font-weight: 500; }
.apple { width: 32px; height: 32px; fill: #e6e6e6; margin-top: -6px; }
.menus { display: flex; gap: 42px; margin-left: 37px; }
.menus b { font-weight: 700; }
.status { margin-left: auto; display: flex; align-items: center; font-weight: 400; }
.status svg:first-child { margin-right: 2px; }
.bars { margin-left: 32px; }
.lang { margin-left: 39px; width: 45px; height: 33px; border: 2.5px solid #ededed; border-radius: 6px; display: flex; align-items: center; justify-content: center; font-size: 23px; }
.pct { margin-left: 38px; font-size: 23px; font-weight: 500; }
.batt { margin-left: 8px; }
.play { margin-left: 36px; }
.wifi { margin-left: 40px; }
.spot { margin-left: 39px; }
.cc { margin-left: 37px; }
.siri { margin-left: 34px; width: 29px; height: 29px; border-radius: 50%; background: radial-gradient(circle at 50% 50%, #f4f4ff 0 8%, transparent 38%), conic-gradient(from 20deg, #3fae86, #287a8e, #2d63ba, #4a3ba0, #c33d73, #6b3350, #3c6d60, #3fae86); }
.date { margin-left: 31px; }
.time { margin-left: 15px; }
.windows { flex: 1; display: flex; gap: 8px; background: linear-gradient(#02040b 0, #070d16 640px, #5d4c43 648px, #3a2d25 800px, #2b2119 960px, #4a4447 1180px, #332c28 1350px, #26211e 1500px, #2a2725 1700px, #4a4142 1885px); }
.chrome { width: 1798px; height: 1887px; border-radius: 22px 22px 20px 20px; overflow: hidden; background: #eeeeee; display: flex; flex-direction: column; }
.strip { height: 86px; flex: none; border-top: 2px solid #faf8f9; border-bottom: 2px solid #9a9a9a; background: #eeeeee; padding-top: 16px; display: flex; }
.lights { width: 187px; padding: 14px 0 0 41px; display: flex; gap: 16px; }
.lights i { width: 24px; height: 24px; border-radius: 50%; background: #f3f3f3; }
.tabs { display: flex; height: 68px; }
.tab { position: relative; height: 68px; padding: 0 0 2px 16px; display: flex; align-items: center; background: linear-gradient(#dbdbdb, #cfcfcf 50%); border-radius: 17px 17px 0 0; color: #3c3c3c; font-size: 23.5px; }
.tab.sep::after { content: ""; position: absolute; right: 0; top: 15px; width: 2px; height: 40px; background: #858585; }
.tab.active { background: #eeeeee; border: 2px solid #979797; border-bottom: 0; height: 70px; padding: 0 0 5px 15px; color: #222; }
.fav { flex: none; }
.termfav { width: 32px; height: 32px; background: #000; display: block; margin-left: -1px; margin-right: -2px; position: relative; }
.termfav i { position: absolute; left: 5px; bottom: 4px; width: 12px; height: 2px; background: #fff; }
.tt { margin-left: 17px; width: 60px; overflow: hidden; -webkit-mask-image: linear-gradient(90deg, #000 50%, transparent 98%); mask-image: linear-gradient(90deg, #000 50%, transparent 98%); }
.tt em { display: inline-block; }
.active .tt { width: 18px; }
.tx { margin-left: 14px; }
.round { width: 57px; height: 57px; margin: 6px 0 0 16px; border-radius: 50%; background: #cfcfcf; display: flex; align-items: center; justify-content: center; }
.round.last { margin-left: 99px; }
.toolbar { height: 86px; flex: none; border-bottom: 2px solid #bdbdbd; background: #eeeeee; padding-left: 30px; display: flex; align-items: center; }
.nav { margin-right: 36px; stroke: #b0b0b0; stroke-width: 3; fill: none; }
.omni { width: 1246px; height: 68px; margin-left: -6px; border-radius: 34px; background: #c9c9c9; display: flex; align-items: center; padding-left: 28px; }
.url { margin-left: 24px; font-size: 27px; color: #535456; display: flex; }
.url b { font-weight: 400; color: #1c1c1e; }
.o1 { margin-left: 55px; }
.o2 { margin-left: 37px; }
.o3 { margin-left: 37px; }
.panel { width: 29px; height: 28px; border: 4px solid #adadad; border-right-width: 11px; background: #fafafa; margin-left: 30px; }
.avatar { width: 44px; height: 44px; border-radius: 50%; background: #92d4f8; margin-left: 28px; display: flex; align-items: center; justify-content: center; }
.update { margin-left: 14px; width: 177px; height: 56px; border: 2.5px solid #2c6632; border-radius: 28px; background: #d3dad3; color: #9aa39c; font-size: 25px; font-weight: 500; display: flex; align-items: center; padding-left: 25px; }
.dots { margin-left: 30px; display: flex; flex-direction: column; gap: 4px; }
.dots i { width: 6px; height: 6px; border-radius: 50%; background: #27632e; }
.viewer { position: relative; flex: 1; background: #303030; overflow: hidden; }
.viewer::after { content: ""; position: absolute; inset: 0; border-left: 2px solid #4b4b4b; border-right: 2px solid #3c3c3c; border-bottom: 2px solid #555; border-radius: 0 0 20px 20px; pointer-events: none; }
.under { position: absolute; left: 0; top: 0; }
.get { position: absolute; left: 49px; top: 1560px; font-size: 27px; color: #1e2023; }
.paper { position: relative; margin-left: 99px; box-shadow: 0 0 28px 8px rgba(0, 0, 0, .35); }
.pdfhead { position: absolute; left: 0; top: 0; width: 1798px; height: 128px; background: rgba(24, 24, 24, .83); display: flex; align-items: center; color: #fff; padding-left: 47px; }
.pdf { width: 36px; height: 36px; margin-left: 45px; border-radius: 4px; background: #db5144; display: flex; align-items: center; justify-content: center; font-size: 14px; font-weight: 800; }
.fname { margin-left: 22px; font-size: 31.5px; font-weight: 500; }
.open { margin-left: 49px; width: 504px; height: 76px; border: 2px solid #888; border-radius: 38px; background: #1f1f1f; display: flex; align-items: center; padding-left: 35px; color: #c6c8c7; font-size: 28px; }
.open span { margin-left: 19px; }
.caret { margin-left: 31px; height: 72px; border-left: 2px solid #888; display: flex; align-items: center; padding-left: 24px; }
.caret::after { content: ""; border: 10px solid transparent; border-top: 11px solid #fff; border-bottom: 0; }
.pacts { margin-left: 287px; display: flex; align-items: center; gap: 54px; }
.pacts svg:nth-child(3) { margin-left: 3px; margin-right: 20px; }
.turn { position: absolute; top: 818px; width: 80px; height: 80px; border-radius: 50%; background: #1f1f1f; display: flex; align-items: center; justify-content: center; }
.turn path { fill: none; stroke: #fff; stroke-width: 3.8; }
.prev { left: 40px; }
.next { left: 1678px; padding-left: 2px; }
.thumb { position: absolute; left: 1774px; top: 1378px; width: 16px; height: 95px; border-radius: 8px; background: #434343; }
.pager { position: absolute; left: 626px; top: 1604px; width: 546px; height: 88px; border-radius: 44px; background: rgba(24, 24, 24, .83); display: flex; color: #fff; font-size: 26.5px; }
.pg { width: 299px; border-right: 2px solid #6c6c6a; display: flex; align-items: center; padding-left: 30px; }
.cur { margin-left: 14px; width: 70px; height: 34px; background: #1d1d1c; display: flex; align-items: center; justify-content: center; }
.sl { margin: 0 32px 0 13px; }
.zm { display: flex; align-items: center; padding-left: 30px; }
.minus { width: 28px; height: 4px; background: #9b9b9a; }
.zm svg:nth-child(2) { margin: 0 46px 0 47px; }

.obsidian { position: relative; z-index: 1; width: 1217px; height: 1887px; border: 2px solid #666a76; border-radius: 22px; overflow: hidden; background: #3c4150; display: flex; flex-direction: column; color: #e4e7ed; box-shadow: 0 10px 64px rgba(0, 0, 0, .6); }
.ic { width: 36px; height: 36px; fill: none; stroke: #c6cad2; stroke-width: 1.75; stroke-linecap: round; stroke-linejoin: round; }
.otitle { height: 78px; flex: none; background: #474d5c; display: flex; align-items: center; padding-left: 27px; }
.olights { display: flex; gap: 16px; width: 146px; }
.olights i { width: 24px; height: 24px; border-radius: 50%; background: #ed6a5f; }
.olights i:nth-child(2) { background: #f5bf4f; }
.olights i:nth-child(3) { background: #61c554; }
.obtn { width: 68px; height: 50px; border-radius: 8px; background: #535968; display: flex; align-items: center; justify-content: center; margin-top: -2px; }
.obtn .ic { stroke: #86a3c8; }
.is { margin-left: 22px; }
.ib { margin-left: 38px; }
.il { margin-left: 48px; width: 38px; }
.otabs { display: flex; align-self: flex-end; height: 66px; margin-left: 49px; font-size: 25px; font-weight: 600; }
.ot { position: relative; flex: none; width: 81px; padding: 0 0 4px 15px; display: flex; align-items: center; }
.ot:nth-child(-n+4)::after { content: ""; position: absolute; right: 0; top: 11px; width: 2px; height: 40px; background: #4a4845; }
.ot:nth-child(5) { width: 79px; }
.im { width: 32px; height: 30px; }
.clip { width: 10px; overflow: hidden; margin-left: 11px; }
.ot.on { background: #30343f; border-radius: 12px 12px 0 0; padding-left: 18px; }
.ot.on::before { content: ""; position: absolute; left: -10px; right: -10px; bottom: 0; height: 10px; background: radial-gradient(circle at 0 0, transparent 9.5px, #30343f 10px) left / 10px 10px no-repeat, radial-gradient(circle at 100% 0, transparent 9.5px, #30343f 10px) right / 10px 10px no-repeat; }
.on .clip { margin-left: 0; width: 8px; }
.red { color: #c2606a; }
.ix { margin-left: 5px; stroke: #e6e8ec; }
.ip { margin-left: 20px; }
.id { margin-left: 40px; }
.ir { margin-left: 27px; width: 38px; }
.obody { flex: 1; display: flex; min-height: 0; }
.ribbon { width: 85px; border-right: 2px solid #474c5b; display: flex; flex-direction: column; align-items: center; padding: 23px 1px 29px 0; gap: 28px; }
.grow { flex: 1; }
.side { width: 401px; border-right: 2px solid #474d5c; padding: 23px 0 0 25px; }
.tools { display: flex; height: 36px; margin-bottom: 25px; padding-left: 61px; }
.folderPlus { margin-left: 29px; }
.sort { margin-left: 29px; }
.collapse { margin-left: 27px; }
.row { position: relative; width: 352px; height: 48.4px; margin-bottom: 5.47px; border-radius: 8px; display: flex; align-items: center; padding-left: 48px; font-size: 25.6px; }
.row.child { padding-left: 82px; }
.row.bold { font-weight: 600; }
.row.active { background: #4b505e; color: #83a0c7; }
.row.child::before { content: ""; position: absolute; left: 24px; top: -3px; height: 54px; width: 2px; background: #565b68; }
.row.lastc::before { height: 50px; }
.chev { position: absolute; left: 8px; width: 30px; height: 30px; fill: none; stroke: #b9bdc6; stroke-width: 2.4; stroke-linecap: round; stroke-linejoin: round; }
.child .chev { left: 43px; }
.tag { margin-left: 14px; width: 59px; height: 27px; border-radius: 8px; background: #474d5b; color: #d9bd86; font-size: 17.5px; font-weight: 600; letter-spacing: 1.3px; display: flex; align-items: center; justify-content: center; }
.note { position: relative; flex: 1; background: #30343f; padding-left: 63px; }
.nhead { display: flex; align-items: center; height: 73px; margin-left: -27px; }
.dim { width: 32px; stroke: #7a7e89; }
.dim + .dim { margin-left: 24px; }
.nt { margin-left: 84px; width: 319px; font-size: 25.6px; }
.bk { margin-left: 76px; }
.ndots { margin-left: 36px; display: flex; flex-direction: column; gap: 5px; }
.ndots i { width: 5px; height: 5px; border-radius: 50%; background: #c6cad2; }
h1 { margin: 70px 0 0; font-size: 70px; line-height: 86px; font-weight: 700; color: #e5cb90; }
h2 { margin: 131px 0 0; font-size: 55.5px; line-height: 68px; font-weight: 700; color: #a8bd8f; }
h1 span, h2 span, p span { display: inline-block; }
p { margin: 62px 0 0; font-size: 38.5px; line-height: 60px; }
h2.pr { margin-top: 155px; }
.block { width: 602px; height: 60px; margin: 61px 0 0 1px; background: #4d3b45; }
.obar { position: absolute; right: -2px; bottom: -2px; width: 497px; height: 54px; border: 2px solid #474d5c; border-radius: 12px 0 20px 0; background: #3c4150; display: flex; align-items: center; padding: 3px 0 0 17px; font-size: 24.5px; }
.obar .ic { width: 31px; height: 31px; margin: 0 20px 0 21px; stroke: #e4e7ed; }
.obar span:last-child { margin-left: 15px; }
</style>
